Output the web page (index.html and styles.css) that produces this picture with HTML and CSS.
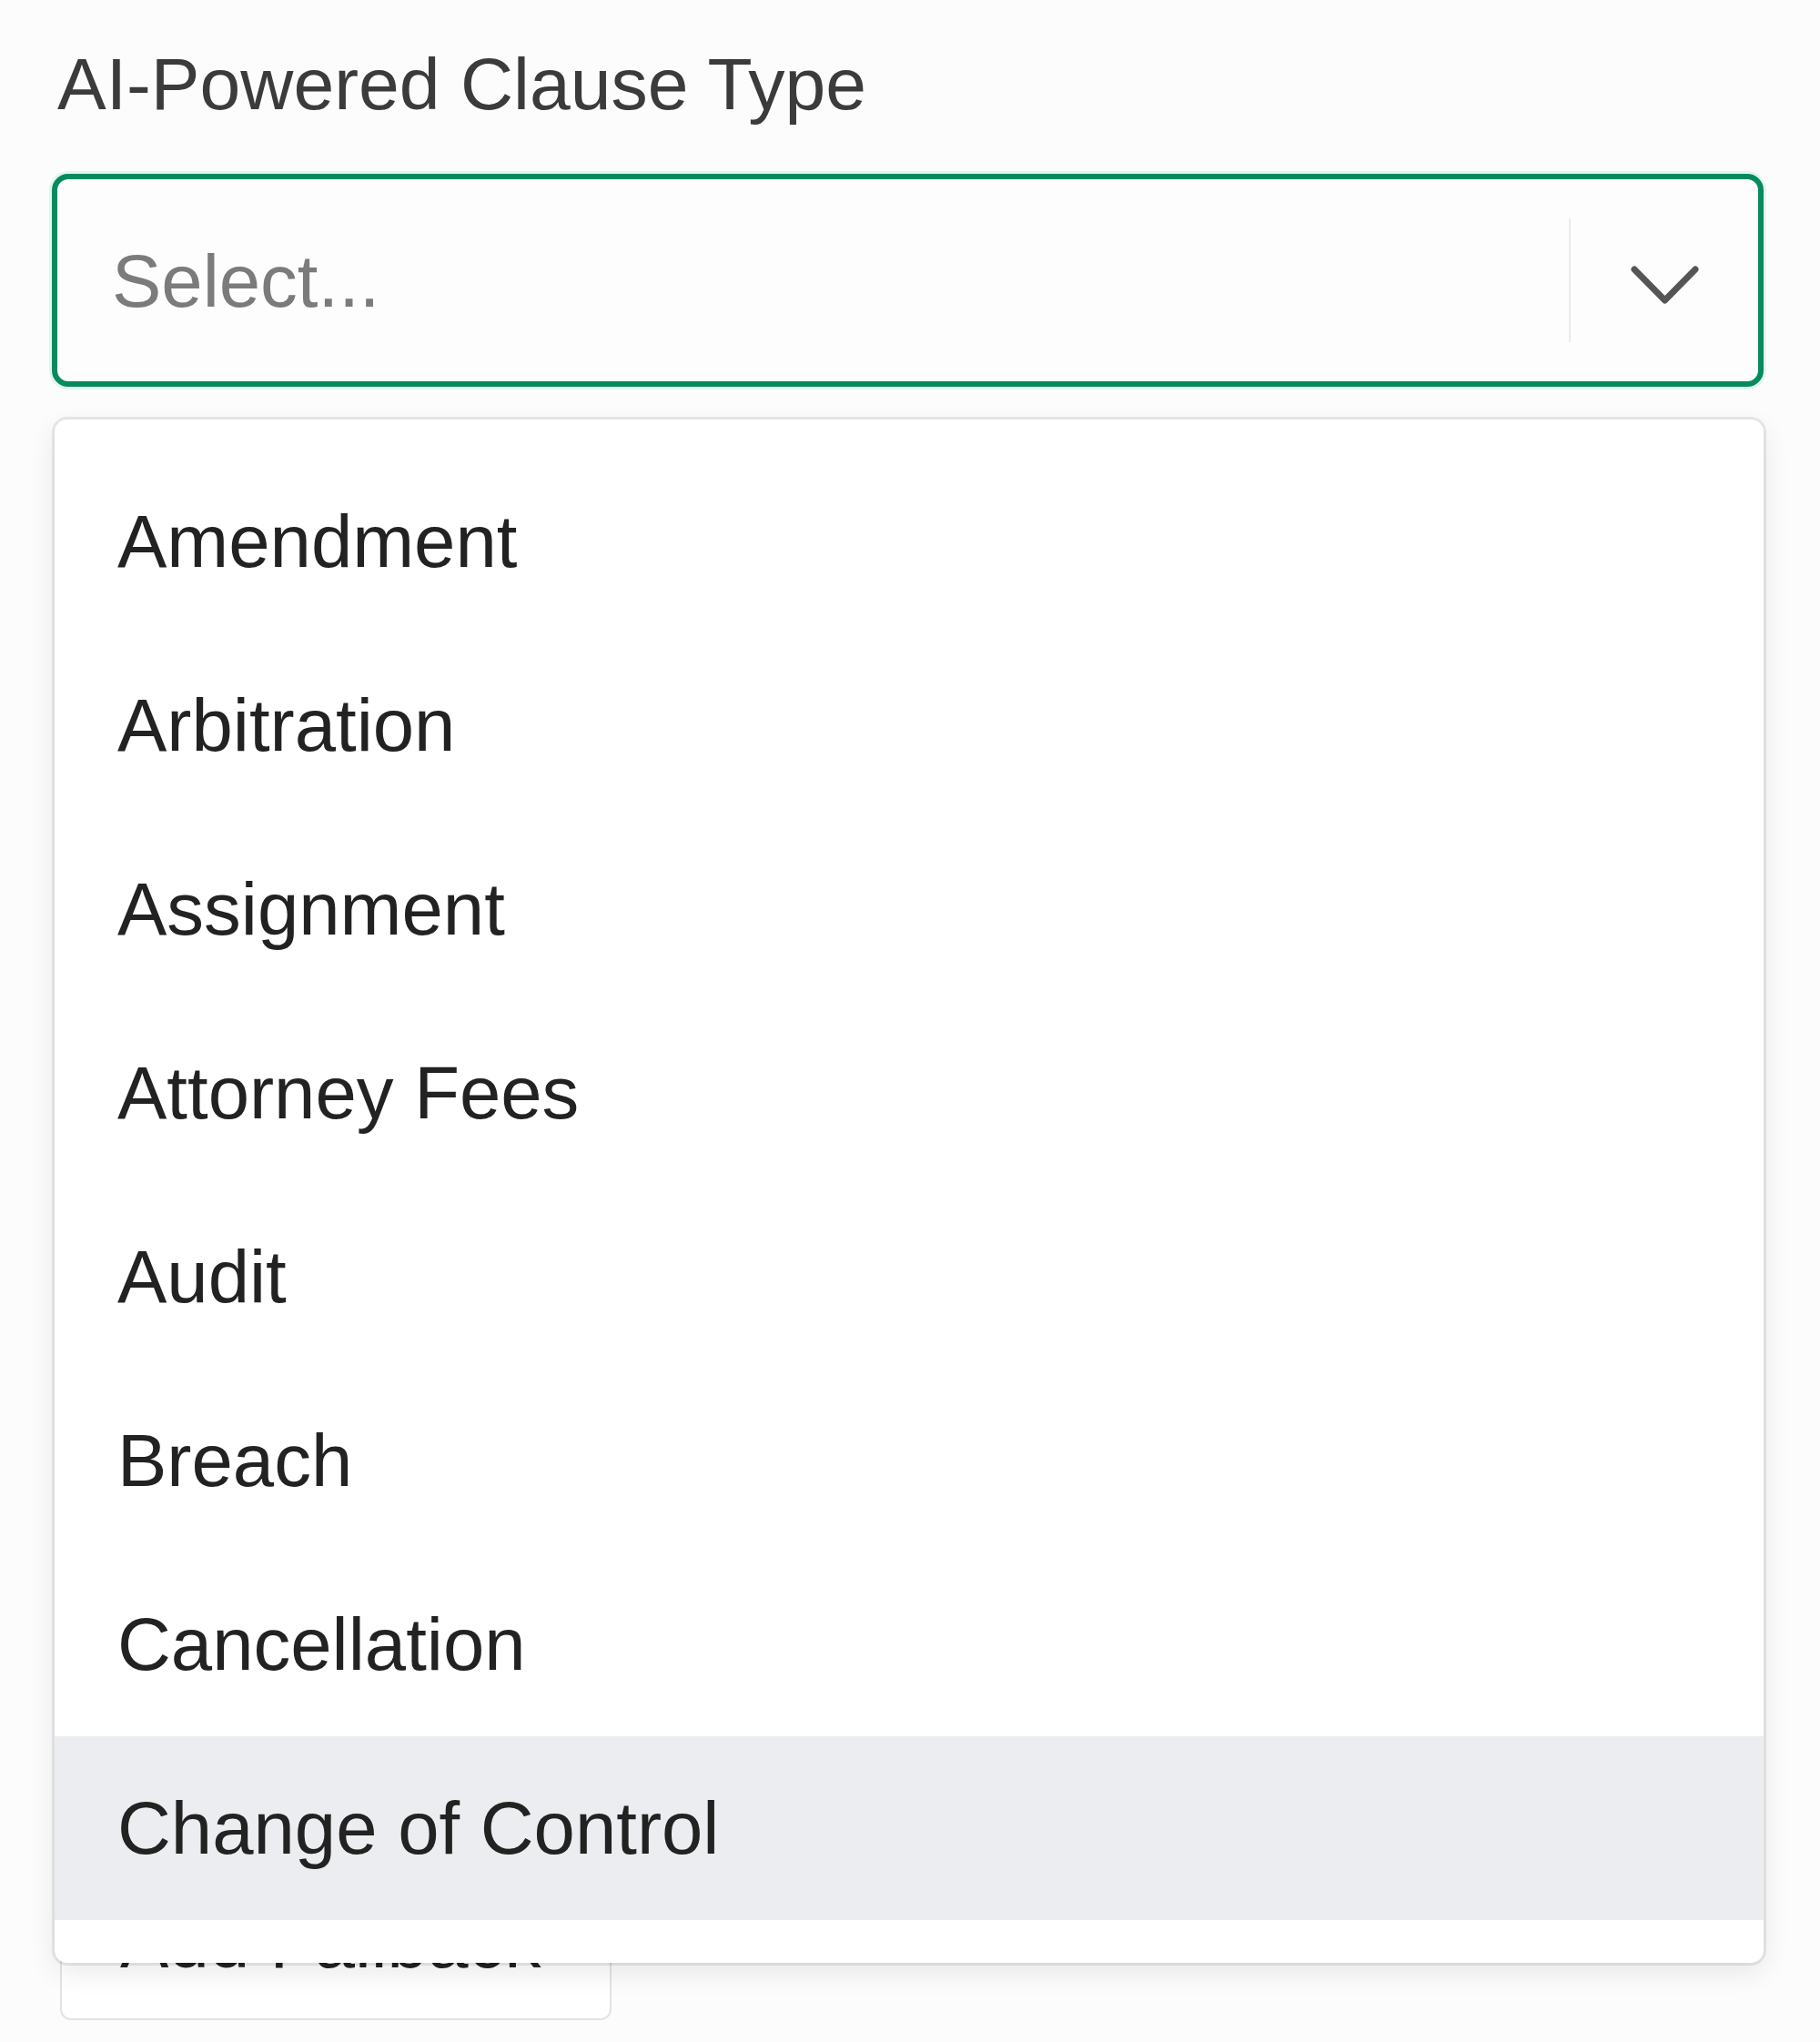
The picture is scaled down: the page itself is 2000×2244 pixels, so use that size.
FILE: index.html
```html
<!DOCTYPE html>
<html lang="en">
<head>
<meta charset="utf-8">
<title>AI-Powered Clause Type</title>
<link rel="stylesheet" href="styles.css">
</head>
<body>
<div class="page">
  <div class="field">
    <label class="field-label">AI-Powered Clause Type</label>
    <div class="select">
      <div class="control">
        <div class="value">Select...</div>
        <div class="indicators">
          <span class="sep"></span>
          <span class="chevron">
            <svg width="77" height="47" viewBox="0 0 77 47"><path d="M5 6 L38.5 40 L72 6" fill="none" stroke="#555" stroke-width="7" stroke-linecap="round" stroke-linejoin="round"/></svg>
          </span>
        </div>
      </div>
      <div class="menu">
        <div class="option">Amendment</div>
        <div class="option">Arbitration</div>
        <div class="option">Assignment</div>
        <div class="option">Attorney Fees</div>
        <div class="option">Audit</div>
        <div class="option">Breach</div>
        <div class="option">Cancellation</div>
        <div class="option focused">Change of Control</div>
      </div>
    </div>
  </div>
  <div class="btn"><span class="btn-text">Add Fallback</span></div>
</div>
</body>
</html>
```

FILE: styles.css
```css
html, body {
  margin: 0;
  padding: 0;
  background: #fcfcfc;
}
body {
  font-family: "Liberation Sans", Arial, Helvetica, sans-serif;
  width: 2000px;
  height: 2244px;
  overflow: hidden;
}
.page {
  padding: 44px 62px 0 57px;
}
.field {
  display: flex;
  flex-direction: column;
  position: relative;
  z-index: 5;
}
.field-label {
  font-size: 80.5px;
  line-height: 96px;
  color: #3b3b3b;
  padding-left: 6px;
  margin-bottom: 51px;
}
.select {
  position: relative;
}
.control {
  box-sizing: border-box;
  height: 234px;
  border: 6px solid #078a5d;
  border-radius: 18px;
  background: #fdfdfd;
  box-shadow: 0 0 0 3px rgba(52, 211, 153, 0.14);
  display: flex;
  align-items: center;
}
.value {
  flex: 1;
  font-size: 81.5px;
  color: #7b7b7b;
  padding-left: 60px;
  padding-top: 2px;
}
.indicators {
  display: flex;
  align-items: center;
  height: 100%;
}
.sep {
  width: 2px;
  height: 136px;
  background: #ebebeb;
}
.chevron {
  width: 206px;
  display: flex;
  justify-content: center;
  align-items: center;
  padding-top: 10px;
}
.chevron svg {
  display: block;
}
.menu {
  position: absolute;
  top: calc(100% + 36px);
  left: 3px;
  right: 0;
  z-index: 2;
  background: #fff;
  border-radius: 14px;
  padding: 33px 0 47px;
  box-shadow: 0 0 0 3px rgba(0, 0, 0, 0.08), 0 10px 30px rgba(0, 0, 0, 0.09);
}
.option {
  height: 202px;
  line-height: 202px;
  font-size: 81.5px;
  color: #222;
  padding-left: 69px;
}
.option.focused {
  background: #ecedf0;
}
.btn {
  position: relative;
  z-index: 0;
  box-sizing: border-box;
  margin-top: 1607px;
  margin-left: 9px;
  width: 606px;
  height: 188px;
  padding: 53px 0 0 64px;
  font-size: 80px;
  line-height: 96px;
  color: #222;
  background: #fff;
  border: 2px solid #e3e3e3;
  border-radius: 12px;
}
```
